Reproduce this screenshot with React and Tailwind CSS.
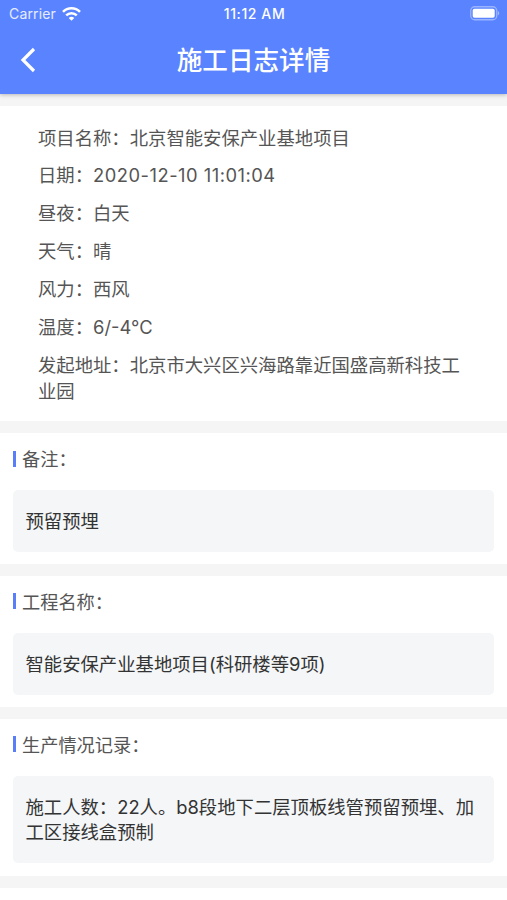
import React from 'react';

const details = [
    { label: '项目名称', value: '北京智能安保产业基地项目' },
    { label: '日期', value: '2020-12-10 11:01:04', spaced: true },
    { label: '昼夜', value: '白天' },
    { label: '天气', value: '晴' },
    { label: '风力', value: '西风' },
    { label: '温度', value: '6/-4°C' },
    { label: '发起地址', value: '北京市大兴区兴海路靠近国盛高新科技工业园' },
];

const sections = [
    { title: '备注', content: '预留预埋' },
    { title: '工程名称', content: '智能安保产业基地项目(科研楼等9项)' },
    { title: '生产情况记录', content: '施工人数：22人。b8段地下二层顶板线管预留预埋、加工区接线盒预制' },
];

const StatusBar = () => (
    <div className="grid h-[27px] grid-cols-3 items-center pl-[9px] pr-[7px] text-[14px] text-white">
        <div className="flex items-center gap-[6px]">
            <span className="tracking-[0.15px] text-white/85">Carrier</span>
            <svg width="19" height="14" viewBox="0 0 19 14" fill="none" stroke="currentColor" strokeWidth="2.5">
                <path d="M1 4.9a12 12 0 0 1 17 0" />
                <path d="M4.2 8.4a7.5 7.5 0 0 1 10.6 0" />
                <path d="M9.5 13.8 6.7 11a4 4 0 0 1 5.6 0z" fill="currentColor" stroke="none" />
            </svg>
        </div>
        <div className="text-center font-medium whitespace-nowrap tracking-[0.6px]">11:12 AM</div>
        <svg className="justify-self-end" width="30" height="15" viewBox="0 0 30 15">
            <rect x="0.75" y="0.75" width="26" height="13" rx="4" fill="none" stroke="white" strokeOpacity="0.4" strokeWidth="1.3" />
            <rect x="2.7" y="2.7" width="22" height="9" rx="1.8" fill="white" />
            <path d="M27.9 5v4.5c1.8-.8 1.8-3.7 0-4.5z" fill="white" fillOpacity="0.45" />
        </svg>
    </div>
);

const Section = ({ title, content }) => (
    <section className="bg-white px-[13px] pt-[13px] pb-[12.4px]">
        <h2 className="flex h-[26px] items-center gap-[6px] pt-px text-[18.2px] text-[#555]">
            <span className="-mt-[2px] h-4 w-[3px] bg-[#597ef7]"></span>
            {`${title}：`}
        </h2>
        <div className="mt-[18px] rounded-[5px] bg-[#f4f6f8] px-[12.5px] pt-[18.6px] pb-[17.2px] text-[18.35px] leading-[25.8px] text-[#333]">
            {content}
        </div>
    </section>
);

const App = () => {
    return (
        <div className="h-[900px] overflow-hidden bg-white font-['Inter','Noto_Sans_CJK_SC',sans-serif]">
            <header className="relative z-10 h-[94px] bg-[#5983ff] text-white shadow-[0_1px_4px_rgba(0,0,0,0.25)]">
                <StatusBar />
                <div className="grid h-[67px] grid-cols-[60px_1fr_60px] items-center">
                    <svg className="-mt-[2px] ml-[20px]" width="17" height="26" viewBox="0 0 17 26" fill="none" stroke="currentColor" strokeWidth="3.2">
                        <path d="M14 2 3 13l11 11" />
                    </svg>
                    <h1 className="pt-[2px] text-center text-[25.6px] font-medium">施工日志详情</h1>
                </div>
            </header>
            <main className="flex flex-col gap-3 bg-[#f5f5f5] py-3">
                <div className="flex h-[315px] flex-col gap-[11.9px] bg-white px-[38px] pt-[18.6px] text-[18.35px] leading-[26px] text-[#555]">
                    {details.map((item) => (
                        <p key={item.label}>
                            {item.spaced ? (
                                <>{`${item.label}：`}<span className="tracking-[0.5px]">{item.value}</span></>
                            ) : (
                                `${item.label}：${item.value}`
                            )}
                        </p>
                    ))}
                </div>
                {sections.map((item) => (
                    <Section key={item.title} title={item.title} content={item.content} />
                ))}
            </main>
        </div>
    );
};

export default App;
